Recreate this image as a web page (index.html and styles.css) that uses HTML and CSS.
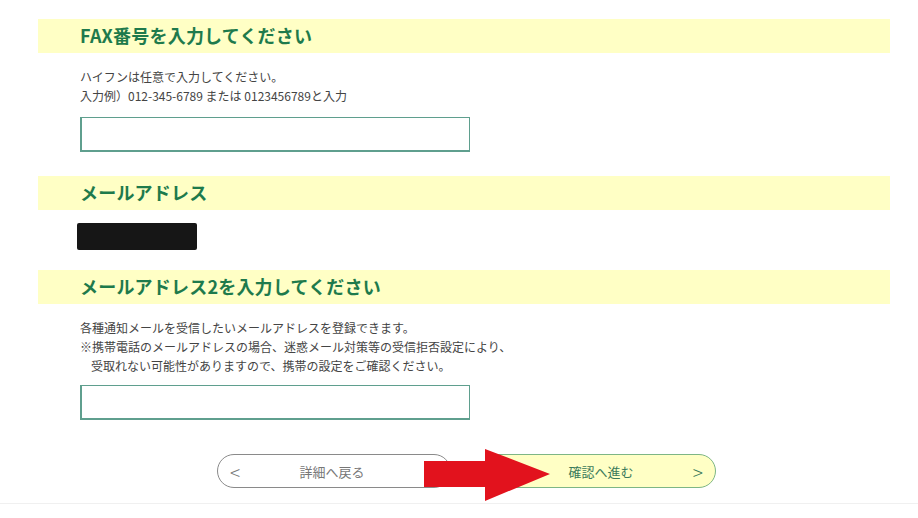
FILE: index.html
```html
<!DOCTYPE html>
<html lang="ja">
<head>
    <meta charset="UTF-8">
    <meta name="viewport" content="width=device-width, initial-scale=1.0">
    <title>入力フォーム</title>
    <link rel="stylesheet" href="styles.css">
</head>
<body>
    <div class="form-container">
        <div class="field">
            <h2 class="field-title">FAX番号を入力してください</h2>
            <div class="field-body">
                <p class="note">ハイフンは任意で入力してください。<br>入力例）012-345-6789 または 0123456789と入力</p>
                <input type="text" class="text-input">
            </div>
        </div>

        <div class="field">
            <h2 class="field-title">メールアドレス</h2>
            <div class="field-body compact">
                <div class="masked"></div>
            </div>
        </div>

        <div class="field">
            <h2 class="field-title">メールアドレス2を入力してください</h2>
            <div class="field-body">
                <p class="note tight">各種通知メールを受信したいメールアドレスを登録できます。<br>※携帯電話のメールアドレスの場合、迷惑メール対策等の受信拒否設定により、<br><span class="indent">受取れない可能性がありますので、携帯の設定をご確認ください。</span></p>
                <input type="text" class="text-input">
            </div>
        </div>

        <div class="buttons">
            <button class="btn btn-back"><span class="chev">&lt;</span><span class="label">詳細へ戻る</span></button>
            <button class="btn btn-next"><span class="label">確認へ進む</span><span class="chev">&gt;</span></button>
            <svg class="arrow" width="130" height="54" viewBox="0 0 130 54">
                <polygon points="0,12 61,12 61,0 126,25 61,52 61,38 0,38" fill="#e2121d"/>
            </svg>
        </div>
    </div>
    <div class="footer-line"></div>
</body>
</html>
```

FILE: styles.css
```css
body {
    margin: 0;
    background-color: #fff;
    font-family: "Noto Sans CJK JP", "Noto Sans", sans-serif;
    color: #444;
}

.form-container {
    width: 852px;
    margin-left: 38px;
    padding-top: 19px;
}

.field-title {
    margin: 0;
    height: 34px;
    line-height: 33px;
    padding-left: 42px;
    background-color: #ffffc5;
    color: #1e7a4c;
    font-size: 18px;
    font-weight: bold;
    letter-spacing: 0.2px;
}

.field-body {
    padding: 14px 0 24px 42px;
}

.field-body.compact {
    padding: 13px 0 20px 39px;
}

.note {
    margin: 0 0 12px 0;
    font-size: 12px;
    line-height: 19px;
    color: #444;
}

.note.tight {
    margin-bottom: 10px;
}

.indent {
    padding-left: 11px;
}

.text-input {
    display: block;
    width: 390px;
    height: 35px;
    box-sizing: border-box;
    border: 1px solid #5f9f8e;
    border-width: 1px 1px 2px 2px;
    background: #fff;
}

.masked {
    width: 120px;
    height: 27px;
    background-color: #161616;
    filter: blur(0.6px);
    border-radius: 2px;
}

.buttons {
    position: relative;
    display: flex;
    gap: 31px;
    padding: 10px 0 0 179px;
}

.btn {
    display: flex;
    align-items: center;
    width: 234px;
    height: 34px;
    padding: 0 12px;
    border-radius: 17px;
    font-family: "Noto Sans CJK JP", sans-serif;
    font-size: 13px;
    cursor: pointer;
}

.btn .label {
    flex: 1;
    text-align: center;
}

.btn .chev {
    font-size: 19px;
    font-weight: 300;
    line-height: 1;
}

.btn-back {
    background-color: #fff;
    border: 1px solid #8a8a8a;
    color: #777;
}

.btn-back .label {
    padding-right: 14px;
}

.btn-next {
    background-color: #ffffc5;
    border: 1px solid #7db685;
    color: #3b7a5b;
}

.btn-next .label {
    padding-left: 14px;
}

.btn-next .chev {
    color: #3b7a5b;
}

.arrow {
    position: absolute;
    left: 386px;
    top: 5px;
}

.footer-line {
    margin-top: 15px;
    border-top: 1px solid #f0f0f0;
}
```
